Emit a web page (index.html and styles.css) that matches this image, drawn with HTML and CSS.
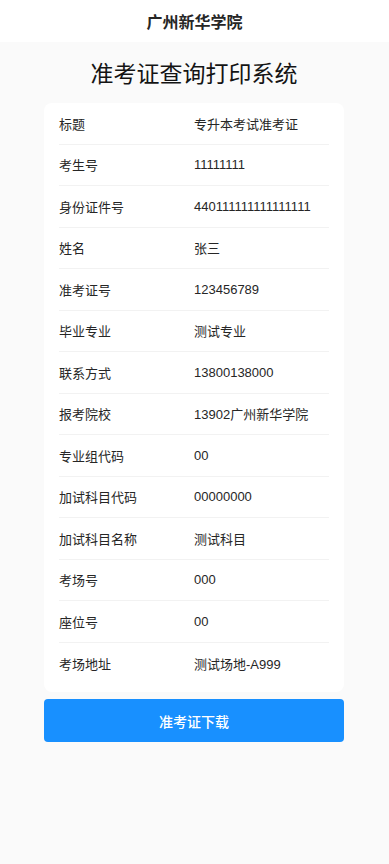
FILE: index.html
```html
<!DOCTYPE html>
<html lang="zh">
<head>
<meta charset="utf-8">
<link rel="stylesheet" href="styles.css">
</head>
<body>
<header class="topbar">广州新华学院</header>
<main class="page">
  <h1 class="title">准考证查询打印系统</h1>
  <section class="card">
    <div class="row"><span class="label">标题</span><span class="value">专升本考试准考证</span></div>
    <div class="row"><span class="label">考生号</span><span class="value">11111111</span></div>
    <div class="row"><span class="label">身份证件号</span><span class="value">440111111111111111</span></div>
    <div class="row"><span class="label">姓名</span><span class="value">张三</span></div>
    <div class="row"><span class="label">准考证号</span><span class="value">123456789</span></div>
    <div class="row"><span class="label">毕业专业</span><span class="value">测试专业</span></div>
    <div class="row"><span class="label">联系方式</span><span class="value">13800138000</span></div>
    <div class="row"><span class="label">报考院校</span><span class="value">13902广州新华学院</span></div>
    <div class="row"><span class="label">专业组代码</span><span class="value">00</span></div>
    <div class="row"><span class="label">加试科目代码</span><span class="value">00000000</span></div>
    <div class="row"><span class="label">加试科目名称</span><span class="value">测试科目</span></div>
    <div class="row"><span class="label">考场号</span><span class="value">000</span></div>
    <div class="row"><span class="label">座位号</span><span class="value">00</span></div>
    <div class="row"><span class="label">考场地址</span><span class="value">测试场地-A999</span></div>
  </section>
  <button class="download">准考证下载</button>
</main>
</body>
</html>
```

FILE: styles.css
```css
html, body {
  margin: 0;
  padding: 0;
  background: #fafafa;
  font-family: "Liberation Sans", Arial, "Noto Sans CJK SC", sans-serif;
  color: #1f1f1f;
}
.topbar {
  height: 42px;
  background: #ffffff;
  display: flex;
  align-items: center;
  justify-content: center;
  font-size: 16px;
  font-weight: bold;
  color: #262626;
}
.page {
  padding: 0 45px 0 44px;
}
.title {
  margin: 16px 0 0;
  height: 45px;
  line-height: 32px;
  text-align: center;
  font-size: 23px;
  font-weight: normal;
  color: #141414;
}
.card {
  background: #ffffff;
  border-radius: 8px;
  padding: 0 15px 8px;
}
.row {
  display: grid;
  grid-template-columns: 1fr 1fr;
  height: 41.5px;
  align-items: center;
  font-size: 13px;
  color: #262626;
  border-bottom: 1px solid #f2f2f2;
  box-sizing: border-box;
}
.row:last-child {
  border-bottom: none;
}
.download {
  display: block;
  width: 100%;
  height: 43px;
  margin-top: 7px;
  border: none;
  border-radius: 4px;
  background: #1890ff;
  color: #ffffff;
  font-family: "Liberation Sans", Arial, "Noto Sans CJK SC", sans-serif;
  font-size: 14px;
  font-weight: 500;
}
```
